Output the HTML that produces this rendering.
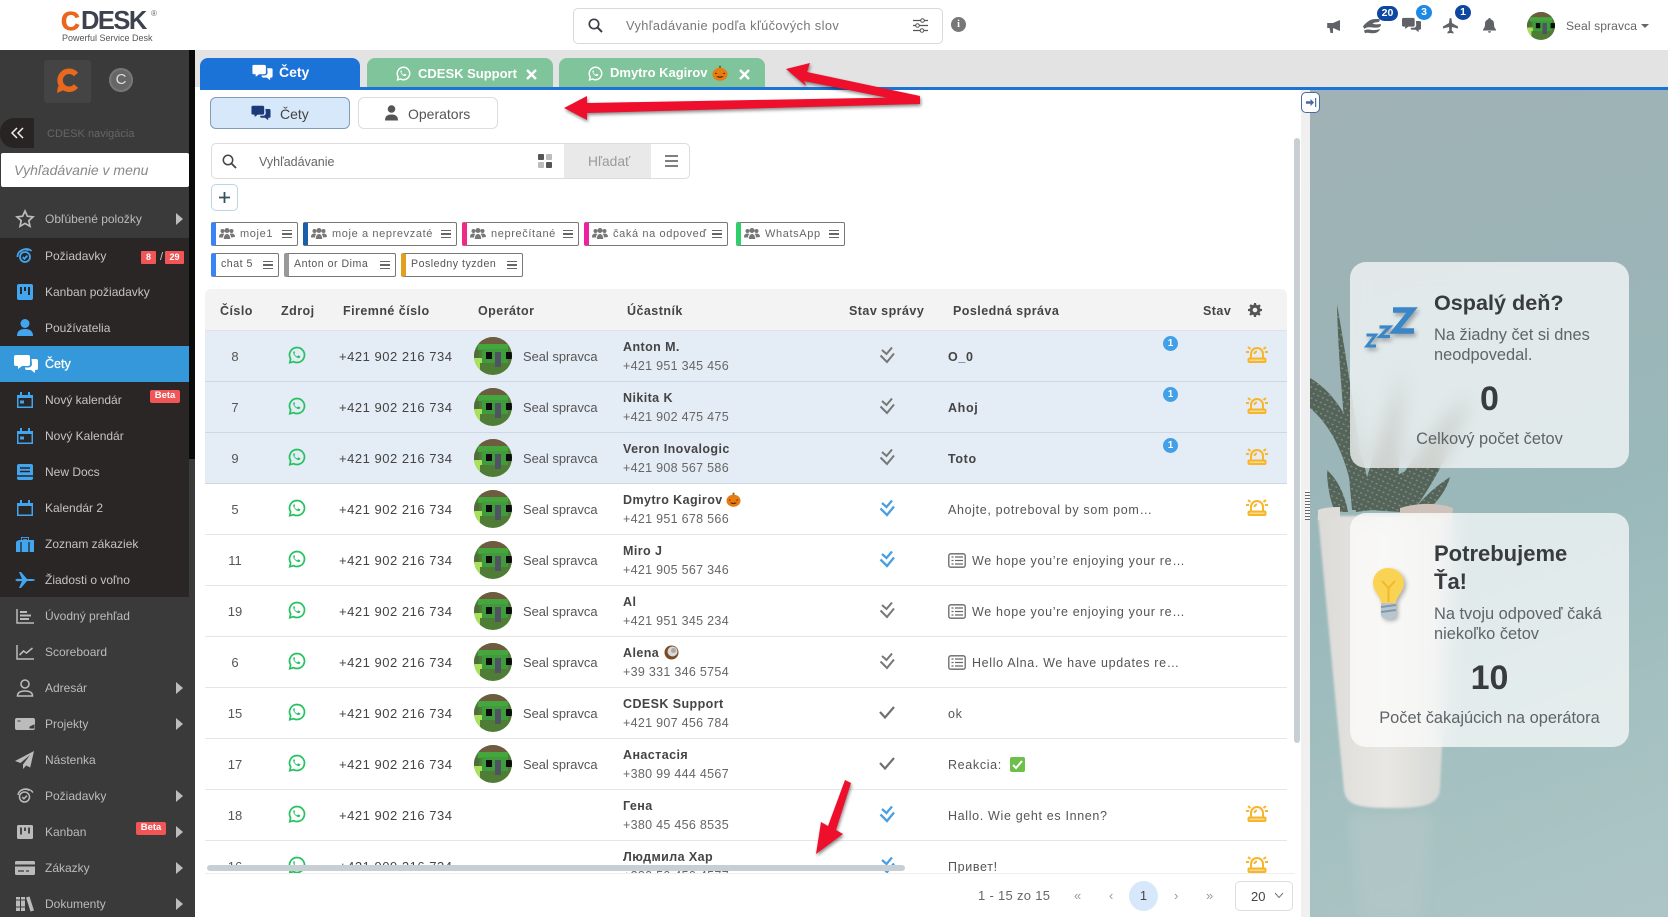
<!DOCTYPE html>
<html lang="sk"><head><meta charset="utf-8"><title>CDESK</title>
<style>
*{box-sizing:border-box}
html,body{margin:0;padding:0;width:1668px;height:917px;overflow:hidden;background:#fff;font-family:"Liberation Sans","Noto Sans CJK SC",sans-serif;color:#444}
.a,.a>*{position:absolute}
.a{inset:0;width:1668px;height:917px;overflow:hidden}
svg{display:block;overflow:visible}
.t{white-space:nowrap;line-height:20px;height:20px}
.s-i{position:absolute;left:0;width:189px;height:36px;font-size:12px;color:#c4c4c4;line-height:37px;padding-left:45px;white-space:nowrap}
.s-i.g{color:#bbb;width:195px}
.s-i svg{position:absolute;left:15px;top:8px;width:20px;height:20px}
.s-i i{position:absolute;left:176px;top:12px;width:0;height:0;border-left:7px solid #bdbdbd;border-top:6px solid transparent;border-bottom:6px solid transparent}
.beta{position:absolute;background:#f25555;color:#fff;font-weight:bold;font-size:9.5px;line-height:12px;height:13px;width:30px;text-align:center;border-radius:2px}
.chip{height:24px;border:1px solid #777;border-left-width:5px;border-radius:2px;font-size:11px;letter-spacing:.62px;color:#666;line-height:22px;white-space:nowrap;background:#fff}
.chip svg{position:absolute;left:3px;top:4px;width:16px;height:14px}
.chip span{position:absolute;left:24px}
.chip.n span{left:5px;font-size:10.6px;letter-spacing:.5px}
.chip b{position:absolute;right:5px;top:7px;width:10px;height:8px;border-top:1.5px solid #666;border-bottom:1.5px solid #666}
.chip b:after{content:"";position:absolute;left:0;right:0;top:2px;height:1.500px;background:#666}
.th{font-size:12.5px;font-weight:bold;letter-spacing:.46px;color:#444;top:301px;white-space:nowrap;line-height:20px}
.r{position:absolute;left:0;width:1082px;height:51px;border-bottom:1px solid #e6e6e6;background:#fff}
.r.h{background:#e4ecf5;border-bottom-color:#cdd8e6}
.r>*{position:absolute}
.n{left:0;width:60px;text-align:center;top:16px;font-size:13px;line-height:20px;color:#555}
.wa{left:83px;top:14px;width:18px;height:20px}
.ph{left:134px;top:16px;font-size:13px;letter-spacing:.52px;line-height:20px;color:#444;white-space:nowrap}
.av{left:269px;top:6px;width:38px;height:38px}
.op{left:318px;top:16px;font-size:12.9px;line-height:20px;color:#555;white-space:nowrap}
.nm{left:418px;top:6px;font-size:12.5px;font-weight:bold;letter-spacing:.42px;line-height:20px;color:#444;white-space:nowrap}
.p2{left:418px;top:25px;font-size:12.5px;letter-spacing:.3px;line-height:20px;color:#666;white-space:nowrap}
.ck{left:674px;top:14px;width:16px;height:20px}
.m{left:743px;top:16px;font-size:12.5px;letter-spacing:.66px;line-height:20px;color:#555;white-space:nowrap}
.m.b{font-weight:bold;color:#444}
.m.x{left:767px}
.nw{left:743px;top:18px;width:18px;height:15px}
.bd{left:958px;top:5px;width:15px;height:15px;border-radius:50%;background:#42a0e8;color:#fff;font-size:10px;font-weight:bold;text-align:center;line-height:15px}
.al{left:1040px;top:13px;width:24px;height:20px}
.emo{width:15px;height:15px}
.card{background:rgba(255,255,255,.7);backdrop-filter:blur(9px);-webkit-backdrop-filter:blur(9px);border-radius:16px}
.ct{font-weight:bold;font-size:22px;color:#383c3f;line-height:28px;white-space:nowrap}
.cs{font-size:16.4px;color:#5f6468;line-height:20px;white-space:nowrap}
.cn{font-weight:bold;font-size:34px;color:#383c3f;line-height:40px;text-align:center}
.hdi{fill:#5f6266}
</style></head><body>
<svg width="0" height="0" style="position:absolute"><defs>
<symbol id="wa" viewBox="0 0 24 26"><path d="M12 3a10 10 0 0 0-8.500 15.200L2.400 23.200l5-1.300A10 10 0 1 0 12 3z" fill="none" stroke="#26c262" stroke-width="2.300"/><path d="M8.600 7.700c-.6 0-1.200.5-1.500 1.400-.3 1.300.2 3 1.700 4.800 1.700 2 3.600 3.200 5.300 3.200 1.100 0 2-.6 2.300-1.600.1-.5 0-.7-.3-.9l-2.100-1c-.3-.2-.6-.1-.8.200l-.6.8c-.2.3-.4.300-.8.100-1.300-.5-2.400-1.600-3.200-2.900-.1-.3-.1-.5.100-.7l.5-.6c.2-.2.200-.4.100-.7l-.8-2c-.1-.3-.2-.4-.6-.4z" fill="#26c262"/></symbol>
<symbol id="av" viewBox="0 0 38 38"><defs><clipPath id="cc"><circle cx="19" cy="19" r="19"/></clipPath></defs><g clip-path="url(#cc)"><rect width="38" height="38" fill="#4f7d36"/><rect width="38" height="8" fill="#6d5c40"/><rect x="4" y="7" width="30" height="6" fill="#45a63e"/><rect x="8" y="12" width="26" height="14" fill="#3f9b3c"/><rect x="0" y="13" width="5" height="9" fill="#4d6d3a"/><rect x="0" y="21" width="8" height="17" fill="#a9e05c"/><rect x="6" y="26" width="10" height="12" fill="#4f7d36"/><rect x="12" y="15" width="6" height="7" fill="#0c0c0c"/><rect x="32" y="15" width="6" height="7" fill="#0c0c0c"/><rect x="21" y="15" width="6" height="15" fill="#4f5560"/></g></symbol>
<symbol id="ckg" viewBox="0 0 16 20"><path d="M3 5l4.500 4L13 2.500M1.500 10.500l6.500 6.500 7-8.500" fill="none" stroke="#777" stroke-width="2"/></symbol>
<symbol id="ckb" viewBox="0 0 16 20"><path d="M3 5l4.500 4L13 2.500M1.500 10.500l6.500 6.500 7-8.500" fill="none" stroke="#4a9fe2" stroke-width="2.300"/></symbol>
<symbol id="ck1" viewBox="0 0 16 20"><path d="M1 10l5 5.500L15 5" fill="none" stroke="#6f6f6f" stroke-width="2.200"/></symbol>
<symbol id="al" viewBox="0 0 24 20"><g fill="none" stroke="#f7b52b" stroke-width="2"><path d="M6 14V10a6 6 0 0 1 12 0v4M9.500 10a2.500 2.500 0 0 1 2.500-2.500"/><rect x="3.500" y="14.500" width="17" height="3.500" rx="1" fill="#fbd98a"/><path d="M1 8h3M20 8h3M3 3l2.500 2M21 3l-2.500 2"/></g></symbol>
<symbol id="nw" viewBox="0 0 18 15"><rect x=".8" y=".8" width="16.400" height="13.400" rx="2" fill="none" stroke="#666" stroke-width="1.300"/><path d="M3.500 4h2M3.500 7.500h2M3.500 11h2M7 4h8M7 7.500h8M7 11h8" stroke="#666" stroke-width="1.300"/></symbol>
<symbol id="pk" viewBox="0 0 16 16"><path d="M8 3V0.800" stroke="#5a6a2a" stroke-width="2"/><ellipse cx="8" cy="9.300" rx="7.500" ry="6.500" fill="#e77c12"/><path d="M3.500 7.500l2 1.500h-2.500zM12.500 7.500l-2 1.500h2.500zM4 11c2.500 2.500 5.500 2.500 8 0l-1.500.5-1-.5-1.500.8-1.500-.8-1 .5z" fill="#5a2a00"/></symbol>
<symbol id="ppl" viewBox="0 0 16 14"><g fill="#777"><circle cx="3.500" cy="4" r="2"/><circle cx="12.500" cy="4" r="2"/><circle cx="8" cy="3.500" r="2.500"/><path d="M0 10c0-2.500 1.500-3.500 3.500-3.500.7 0 1.300.2 1.800.5C4.500 8 4 9 4 10.500H0zM16 10c0-2.500-1.500-3.500-3.500-3.500-.7 0-1.300.2-1.800.5.800 1 1.300 2 1.300 3.500zM4.800 12c0-3 1.300-5 3.200-5s3.200 2 3.200 5z"/></g></symbol>
<symbol id="chat" viewBox="0 0 24 20"><path d="M2 1h12a2 2 0 0 1 2 2v7a2 2 0 0 1-2 2H8l-4 3v-3H2a2 2 0 0 1-2-2V3a2 2 0 0 1 2-2z"/><path d="M17.500 5H22a2 2 0 0 1 2 2v7a2 2 0 0 1-2 2h-1v3l-4-3h-4a2 2 0 0 1-2-2v-.500h3.500a3.500 3.500 0 0 0 3.500-3.500z"/></symbol>
<symbol id="tgl" viewBox="0 0 20 20"><path d="M3 8h7V4.500l5.500 5.500-5.500 5.500V12H3z"/><rect x="17" y="3" width="1.800" height="14"/></symbol>
</defs></svg>

<div class="a">
<!-- header -->
<div style="left:0;top:0;width:1668px;height:50px;background:#fff"></div>
<div style="left:61px;top:6px;font-size:26px;font-weight:bold;line-height:30px;letter-spacing:-1px;color:#e9661c;-webkit-text-stroke:.7px #e9661c">C</div>
<div style="left:81px;top:6px;font-size:25.5px;font-weight:bold;line-height:30px;letter-spacing:-1.500px;color:#3d424e">DESK</div>
<div style="left:151px;top:9px;font-size:8px;line-height:10px;color:#666">®</div>
<div class="t" style="left:62px;top:28px;font-size:9px;color:#555">Powerful Service Desk</div>

<div style="left:573px;top:8px;width:370px;height:36px;border:1px solid #d9d9d9;border-radius:5px;background:#fff"></div>
<svg style="left:588px;top:18px;width:15px;height:15px" viewBox="0 0 15 15"><circle cx="6" cy="6" r="4.700" fill="none" stroke="#3d3d45" stroke-width="1.700"/><path d="M9.500 9.500L14 14" stroke="#3d3d45" stroke-width="2"/></svg>
<div class="t" style="left:626px;top:16px;font-size:12.8px;letter-spacing:.4px;color:#777">Vyhľadávanie podľa kľúčových slov</div>
<svg style="left:913px;top:18px;width:15px;height:15px" viewBox="0 0 15 15"><path d="M0 2.500h15M0 7.500h15M0 12.500h15" stroke="#555" stroke-width="1.200"/><circle cx="9.500" cy="2.500" r="1.800" fill="#fff" stroke="#555"/><circle cx="4.500" cy="7.500" r="1.800" fill="#fff" stroke="#555"/><circle cx="9" cy="12.500" r="1.800" fill="#fff" stroke="#555"/></svg>
<div style="left:951px;top:17px;width:15px;height:15px;border-radius:50%;background:#777;color:#fff;font:bold 10px/15px 'Liberation Serif',serif;text-align:center">i</div>

<svg class="hdi" style="left:1326px;top:19px;width:15px;height:15px" viewBox="0 0 15 15"><path d="M14 1v11L7 9v5H4.500L3.500 9H1.200V4H7z"/></svg>
<svg class="hdi" style="left:1363px;top:18px;width:18px;height:16px" viewBox="0 0 18 16"><path d="M5 3.500C8 1 11 .8 16 1c1 0 1 2.500-.5 3-2.500.5-4.500.4-6 1.500C12 7 15 6 18 6.200c0 1.500-1 3-3 3.300-4 .5-7-.5-9.500-.2-2 .2-3 .7-4 1.700L0 8.500C1 6.500 3 5 5 3.500zM1 12.500c3-1.500 5-1 8-.5 2.500.3 5 0 8-1-1 3-4 4.500-8 4.200-3-.2-5-1-7 0z"/></svg>
<div style="left:1377px;top:6px;width:21px;height:15px;border-radius:8px;background:#0d47a1;color:#fff;font-size:10.5px;font-weight:bold;line-height:15px;text-align:center">20</div>
<svg class="hdi" style="left:1402px;top:17px;width:19px;height:16px" viewBox="0 0 24 20"><use href="#chat"/></svg>
<div style="left:1416px;top:5px;width:16px;height:15px;border-radius:50%;background:#1e88e5;color:#fff;font-size:10.500px;font-weight:bold;line-height:15px;text-align:center">3</div>
<svg class="hdi" style="left:1443px;top:18px;width:15px;height:16px" viewBox="0 0 15 16"><path d="M6.500 0.500C7 0 8 0 8.500 .5l.5 4.500 6 3.500v2L9 9l-.3 3.500L10.500 14v1.500L7.500 15l-3 .5V14l1.800-1.500L6 9l-6 1.500v-2L6 5z"/></svg>
<div style="left:1455px;top:5px;width:16px;height:15px;border-radius:50%;background:#0d47a1;color:#fff;font-size:10.500px;font-weight:bold;line-height:15px;text-align:center">1</div>
<svg class="hdi" style="left:1483px;top:18px;width:13px;height:15px" viewBox="0 0 13 15"><path d="M6.500 0a1.200 1.200 0 0 1 1.200 1.300C10 2 11 3.800 11 6c0 3 .7 4 2 5.500v1H0v-1C1.300 10 2 9 2 6c0-2.200 1-4 3.300-4.700A1.200 1.200 0 0 1 6.500 0zM5 13.300h3a1.500 1.500 0 0 1-3 0z"/></svg>
<svg style="left:1527px;top:12px;width:28px;height:28px" viewBox="0 0 38 38"><use href="#av"/></svg>
<div class="t" style="left:1566px;top:16px;font-size:12.1px;letter-spacing:.1px;color:#666">Seal spravca</div>
<div style="left:1641px;top:24px;width:0;height:0;border-top:4px solid #666;border-left:4px solid transparent;border-right:4px solid transparent"></div>

<!-- tab strip -->
<div style="left:195px;top:50px;width:1473px;height:37px;background:#e3e3e3"></div>
<div style="left:200px;top:58px;width:160px;height:32px;background:#1b73d8;border-radius:8px 8px 0 0"></div>
<svg style="left:252px;top:64px;width:21px;height:17px;fill:#fff" viewBox="0 0 24 20"><use href="#chat"/></svg>
<div class="t" style="left:279px;top:62px;font-size:14px;font-weight:bold;color:#fff">Čety</div>
<div style="left:367px;top:58px;width:186px;height:30px;background:#7fc49a;border-radius:8px 8px 0 0"></div>
<svg style="left:396px;top:65px;width:15px;height:17px" viewBox="0 0 24 26"><g style="filter:brightness(0) invert(1)"><use href="#wa"/></g></svg>
<div class="t" style="left:418px;top:64px;font-size:13px;font-weight:bold;color:#fff">CDESK Support</div>
<svg style="left:526px;top:69px;width:11px;height:11px" viewBox="0 0 11 11"><path d="M1 1l9 9M10 1l-9 9" stroke="#fff" stroke-width="2.400"/></svg>
<div style="left:559px;top:58px;width:206px;height:30px;background:#7fc49a;border-radius:8px 8px 0 0"></div>
<svg style="left:588px;top:65px;width:15px;height:17px" viewBox="0 0 24 26"><g style="filter:brightness(0) invert(1)"><use href="#wa"/></g></svg>
<div class="t" style="left:610px;top:63px;font-size:13px;font-weight:bold;color:#fff">Dmytro Kagirov</div>
<svg style="left:712px;top:65px;width:16px;height:16px" viewBox="0 0 16 16"><use href="#pk"/></svg>
<svg style="left:739px;top:69px;width:11px;height:11px" viewBox="0 0 11 11"><path d="M1 1l9 9M10 1l-9 9" stroke="#fff" stroke-width="2.400"/></svg>
<div style="left:200px;top:87px;width:1468px;height:3px;background:#1b73d8"></div>

<!-- sidebar -->
<div style="left:0;top:50px;width:195px;height:867px;background:#3a3a3a"></div>
<div style="left:189px;top:50px;width:6px;height:409px;background:#0a0a0a"></div>
<div style="left:44px;top:60px;width:47px;height:43px;background:#444;border-radius:3px"></div>
<svg style="left:55px;top:68px;width:25px;height:25px" viewBox="0 0 25 25"><path d="M21 6.500A9 9 0 1 0 21 18" fill="none" stroke="#e9681d" stroke-width="5.500"/><path d="M3 18l-1 7 7-3z" fill="#e9681d"/></svg>
<div style="left:109px;top:68px;width:24px;height:24px;border-radius:50%;background:#666;color:#ddd;font-size:15px;line-height:24px;text-align:center;box-shadow:inset 0 0 0 2px #777">C</div>
<div style="left:0;top:118px;width:34px;height:30px;background:#282423;border-radius:14px 0 0 14px"></div>
<svg style="left:11px;top:127px;width:13px;height:12px" viewBox="0 0 13 12"><path d="M6 1L1 6l5 5M12 1L7 6l5 5" fill="none" stroke="#eee" stroke-width="1.500"/></svg>
<div class="t" style="left:47px;top:124px;font-size:11px;color:#666">CDESK navigácia</div>
<div style="left:1px;top:153px;width:188px;height:34px;background:#fff;border-radius:2px;font-style:italic;font-size:14px;color:#888;line-height:35px;padding-left:13px">Vyhľadávanie v menu</div>
<div style="left:0;top:238px;width:189px;height:359px;background:#2a2625"></div>

<div class="s-i g" style="top:201px"><svg viewBox="0 0 20 20"><path d="M10 2l2.400 5.200 5.600.7-4.200 3.800 1.200 5.600-5-2.900-5 2.900 1.200-5.600L2 7.900l5.600-.7z" fill="none" stroke="#bbb" stroke-width="1.700"/></svg>Obľúbené položky<i></i></div>
<div class="s-i" style="top:238px"><svg viewBox="0 0 20 20"><g fill="none" stroke="#42a5f0" stroke-width="1.800"><circle cx="10" cy="11" r="5"/><path d="M2.500 11a7.500 7.500 0 0 1 11-6.700M5 6c3-3.500 8-4 11.500-1"/><path d="M7.700 11l1.700 1.800 3-3.200"/></g></svg>Požiadavky</div>
<div style="left:141px;top:251px;width:15px;height:13px;background:#f25555;color:#fff;font-size:9px;font-weight:bold;line-height:13px;text-align:center;border-radius:1px">8</div>
<div class="t" style="left:160px;top:247px;font-size:11px;color:#ccc">/</div>
<div style="left:165px;top:251px;width:19px;height:13px;background:#f25555;color:#fff;font-size:9px;font-weight:bold;line-height:13px;text-align:center;border-radius:1px">29</div>
<div class="s-i" style="top:274px"><svg viewBox="0 0 20 20"><rect x="2" y="2" width="16" height="16" rx="2" fill="#42a5f0"/><path d="M6 5v7M10 5v4M14 5v8" stroke="#2a2625" stroke-width="2"/></svg>Kanban požiadavky</div>
<div class="s-i" style="top:310px"><svg viewBox="0 0 20 20"><circle cx="10" cy="5.500" r="4.500" fill="#42a5f0"/><path d="M2 18c0-5 3-7 8-7s8 2 8 7z" fill="#42a5f0"/></svg>Používatelia</div>
<div style="left:0;top:346px;width:189px;height:36px;background:#3498db"></div>
<div class="s-i" style="top:346px;color:#fff;background:#3498db;font-size:12.500px;font-weight:normal;-webkit-text-stroke:.3px #fff"><svg viewBox="0 0 24 20" style="width:24px;left:14px;fill:#fff"><use href="#chat"/></svg>Čety</div>
<div class="s-i" style="top:382px"><svg viewBox="0 0 20 20"><path d="M2 5h16v13H2z" fill="#42a5f0"/><path d="M3.500 8h13v8.500h-13z" fill="#2a2625"/><path d="M5 2h2v4H5zM13 2h2v4h-2z" fill="#42a5f0"/><rect x="5" y="10.500" width="4" height="3" fill="#42a5f0"/></svg>Nový kalendár</div>
<div class="beta" style="left:150px;top:390px">Beta</div>
<div class="s-i" style="top:418px"><svg viewBox="0 0 20 20"><path d="M2 5h16v13H2z" fill="#42a5f0"/><path d="M3.500 8h13v8.500h-13z" fill="#2a2625"/><path d="M5 2h2v4H5zM13 2h2v4h-2z" fill="#42a5f0"/><rect x="5" y="10.500" width="4" height="3" fill="#42a5f0"/></svg>Nový Kalendár</div>
<div class="s-i" style="top:454px"><svg viewBox="0 0 20 20"><rect x="2" y="2" width="16" height="16" rx="2" fill="#42a5f0"/><path d="M5 6h10M5 9.500h10M2 14h16" stroke="#2a2625" stroke-width="1.500"/></svg>New Docs</div>
<div class="s-i" style="top:490px"><svg viewBox="0 0 20 20"><path d="M2 5h16v13H2z" fill="#42a5f0"/><path d="M3.500 8h13v8.500h-13z" fill="#2a2625"/><path d="M5 2h2v4H5zM13 2h2v4h-2z" fill="#42a5f0"/></svg>Kalendár 2</div>
<div class="s-i" style="top:526px"><svg viewBox="0 0 20 20"><path d="M6 6V3h8v3h5v12H1V9c0-2 2-3 5-3z" fill="#42a5f0"/><path d="M7.500 6V4.500h5V6M6 8v10M14 8v10" fill="none" stroke="#2a2625" stroke-width="1.300"/></svg>Zoznam zákaziek</div>
<div class="s-i" style="top:562px"><svg viewBox="0 0 20 20"><path d="M0 10l2-1.200L7 9 4 2h2l6 7h5c2 0 3 .6 3 1s-1 1-3 1h-5l-6 7H4l3-7-5 .2z" fill="#42a5f0"/></svg>Žiadosti o voľno</div>
<div class="s-i g" style="top:598px"><svg viewBox="0 0 20 20"><path d="M2 3v14h17" fill="none" stroke="#bbb" stroke-width="1.500"/><path d="M5 6h7M5 9.500h11M5 13h9" stroke="#bbb" stroke-width="2"/></svg>Úvodný prehľad</div>
<div class="s-i g" style="top:634px"><svg viewBox="0 0 20 20"><path d="M2 3v14h17" fill="none" stroke="#bbb" stroke-width="1.500"/><path d="M4.500 13l4-4 3 2 6-5" fill="none" stroke="#bbb" stroke-width="1.600"/></svg>Scoreboard</div>
<div class="s-i g" style="top:670px"><svg viewBox="0 0 20 20"><g fill="none" stroke="#bbb" stroke-width="1.600"><circle cx="10" cy="6" r="4"/><path d="M2.500 18c0-3.500 2.500-5 7.500-5s7.500 1.500 7.500 5z"/></g></svg>Adresár<i></i></div>
<div class="s-i g" style="top:706px"><svg viewBox="0 0 20 20"><rect x="0" y="4" width="20" height="12" rx="2" fill="#bbb"/><path d="M2.500 7h3M15 13l4-2v3h-4z" fill="#3a3a3a" stroke="#3a3a3a"/></svg>Projekty<i></i></div>
<div class="s-i g" style="top:742px"><svg viewBox="0 0 20 20"><path d="M19 1L0 11l5.500 2L15 5 8 14.500v4.500l3.200-3.500 4 2z" fill="#bbb"/></svg>Nástenka</div>
<div class="s-i g" style="top:778px"><svg viewBox="0 0 20 20"><g fill="none" stroke="#bbb" stroke-width="1.500"><circle cx="9.500" cy="11" r="5"/><path d="M3 9a7 7 0 0 1 11-4.500M6 4.500c3.500-2.500 9-2 12 2"/><path d="M7.200 11l1.700 1.800 3-3.200"/></g></svg>Požiadavky<i></i></div>
<div class="s-i g" style="top:814px"><svg viewBox="0 0 20 20"><rect x="2" y="3" width="16" height="14" rx="1.500" fill="#bbb"/><path d="M6 5.500v7M10 5.500v3.500M14 5.500v6" stroke="#3a3a3a" stroke-width="1.800"/></svg>Kanban<i></i></div>
<div class="beta" style="left:136px;top:822px">Beta</div>
<div class="s-i g" style="top:850px"><svg viewBox="0 0 20 20"><rect x="0" y="3" width="20" height="14" rx="1.500" fill="#bbb"/><path d="M0 7.500h20" stroke="#3a3a3a" stroke-width="2"/><path d="M3 13h6M11 13h3" stroke="#3a3a3a" stroke-width="1.300"/></svg>Zákazky<i></i></div>
<div class="s-i g" style="top:886px"><svg viewBox="0 0 20 20"><path d="M1 3h4v14H1zM6 3h4v14H6zM11 3.500l3.500-1 4.500 14-3.500 1z" fill="#bbb"/><path d="M1 6h9M1 13h9" stroke="#3a3a3a"/></svg>Dokumenty<i></i></div>

<!-- toolbar -->
<div style="left:210px;top:97px;width:140px;height:32px;background:#d6e8f9;border:1px solid #7f9cb9;border-radius:6px"></div>
<svg style="left:251px;top:105px;width:20px;height:16px;fill:#1c3a78" viewBox="0 0 24 20"><use href="#chat"/></svg>
<div class="t" style="left:280px;top:104px;font-size:14px;color:#444">Čety</div>
<div style="left:358px;top:97px;width:140px;height:32px;background:#fff;border:1px solid #ddd;border-radius:6px"></div>
<svg style="left:384px;top:105px;width:15px;height:16px;fill:#555" viewBox="0 0 15 16"><circle cx="7.500" cy="4" r="3.800"/><path d="M1 15.500c0-4.500 2.500-6 6.500-6s6.500 1.500 6.500 6z"/></svg>
<div class="t" style="left:408px;top:104px;font-size:14px;color:#555">Operators</div>

<div style="left:211px;top:143px;width:479px;height:36px;background:#fff;border:1px solid #dcdcdc;border-radius:5px"></div>
<div style="left:564px;top:144px;width:87px;height:34px;background:#e9e9e9"></div>
<svg style="left:222px;top:154px;width:15px;height:15px" viewBox="0 0 15 15"><circle cx="6" cy="6" r="4.700" fill="none" stroke="#444" stroke-width="1.500"/><path d="M9.500 9.500L14 14" stroke="#444" stroke-width="1.800"/></svg>
<div class="t" style="left:259px;top:152px;font-size:12.500px;color:#666">Vyhľadávanie</div>
<svg style="left:538px;top:154px;width:14px;height:14px" viewBox="0 0 14 14"><rect width="6" height="6" rx="1" fill="#555"/><rect x="8" width="6" height="6" rx="1" fill="#bbb"/><rect y="8" width="6" height="6" rx="1" fill="#bbb"/><rect x="8" y="8" width="6" height="6" rx="1" fill="#555"/></svg>
<div class="t" style="left:588px;top:152px;font-size:13.800px;color:#9a9a9a">Hľadať</div>
<svg style="left:665px;top:155px;width:13px;height:12px" viewBox="0 0 13 12"><path d="M0 1h13M0 6h13M0 11h13" stroke="#555" stroke-width="1.600"/></svg>
<div style="left:211px;top:184px;width:27px;height:27px;background:#fff;border:1px solid #b9d6e6;border-radius:5px"></div>
<svg style="left:219px;top:192px;width:11px;height:11px" viewBox="0 0 11 11"><path d="M5.500 0v11M0 5.500h11" stroke="#35505e" stroke-width="1.800"/></svg>

<div class="chip" style="left:211px;top:222px;width:87px;border-left-color:#3b82f6"><svg viewBox="0 0 16 14"><use href="#ppl"/></svg><span>moje1</span><b></b></div>
<div class="chip" style="left:303px;top:222px;width:154px;border-left-color:#1a5fa8"><svg viewBox="0 0 16 14"><use href="#ppl"/></svg><span>moje a neprevzaté</span><b></b></div>
<div class="chip" style="left:462px;top:222px;width:117px;border-left-color:#ee2a86"><svg viewBox="0 0 16 14"><use href="#ppl"/></svg><span>neprečítané</span><b></b></div>
<div class="chip" style="left:584px;top:222px;width:144px;border-left-color:#ee1fa0"><svg viewBox="0 0 16 14"><use href="#ppl"/></svg><span>čaká na odpoveď</span><b></b></div>
<div class="chip" style="left:736px;top:222px;width:109px;border-left-color:#2fcf6a"><svg viewBox="0 0 16 14"><use href="#ppl"/></svg><span>WhatsApp</span><b></b></div>
<div class="chip n" style="left:211px;top:253px;width:68px;border-left-color:#3b82f6"><span>chat 5</span><b></b></div>
<div class="chip n" style="left:284px;top:253px;width:112px;border-left-color:#999"><span>Anton or Dima</span><b></b></div>
<div class="chip n" style="left:401px;top:253px;width:122px;border-left-color:#e0a020"><span>Posledny tyzden</span><b></b></div>

<!-- table -->
<div style="left:205px;top:289px;width:1082px;height:42px;background:#f3f3f3;border-bottom:1px solid #e2e2e2;border-radius:6px 6px 0 0"></div>
<div class="th" style="left:220px">Číslo</div>
<div class="th" style="left:281px">Zdroj</div>
<div class="th" style="left:343px">Firemné číslo</div>
<div class="th" style="left:478px">Operátor</div>
<div class="th" style="left:627px">Účastník</div>
<div class="th" style="left:849px">Stav správy</div>
<div class="th" style="left:953px">Posledná správa</div>
<div class="th" style="left:1203px">Stav</div>
<svg style="left:1248px;top:303px;width:14px;height:14px" viewBox="0 0 14 14"><path d="M6 0h2l.4 1.900 1.300.5 1.600-1 1.400 1.400-1 1.600.5 1.300L14 6v2l-1.900.4-.5 1.300 1 1.600-1.400 1.400-1.600-1-1.300.5L8 14H6l-.4-1.900-1.300-.5-1.600 1-1.400-1.400 1-1.600-.5-1.300L0 8V6l1.900-.4.500-1.300-1-1.600L2.800 1.300l1.600 1 1.300-.5zM7 4.700a2.300 2.300 0 1 0 0 4.600 2.300 2.300 0 0 0 0-4.600z" fill="#555" fill-rule="evenodd"/></svg>

<div style="left:205px;top:331px;width:1082px;height:542px;overflow:hidden">
<div class="r h" style="top:0"><span class="n">8</span><svg class="wa"><use href="#wa"/></svg><span class="ph">+421 902 216 734</span><svg class="av"><use href="#av"/></svg><span class="op">Seal spravca</span><span class="nm">Anton M.</span><span class="p2">+421 951 345 456</span><svg class="ck"><use href="#ckg"/></svg><span class="m b">O_0</span><span class="bd">1</span><svg class="al"><use href="#al"/></svg></div>
<div class="r h" style="top:51px"><span class="n">7</span><svg class="wa"><use href="#wa"/></svg><span class="ph">+421 902 216 734</span><svg class="av"><use href="#av"/></svg><span class="op">Seal spravca</span><span class="nm">Nikita K</span><span class="p2">+421 902 475 475</span><svg class="ck"><use href="#ckg"/></svg><span class="m b">Ahoj</span><span class="bd">1</span><svg class="al"><use href="#al"/></svg></div>
<div class="r h" style="top:102px"><span class="n">9</span><svg class="wa"><use href="#wa"/></svg><span class="ph">+421 902 216 734</span><svg class="av"><use href="#av"/></svg><span class="op">Seal spravca</span><span class="nm">Veron Inovalogic</span><span class="p2">+421 908 567 586</span><svg class="ck"><use href="#ckg"/></svg><span class="m b">Toto</span><span class="bd">1</span><svg class="al"><use href="#al"/></svg></div>
<div class="r" style="top:153px"><span class="n">5</span><svg class="wa"><use href="#wa"/></svg><span class="ph">+421 902 216 734</span><svg class="av"><use href="#av"/></svg><span class="op">Seal spravca</span><span class="nm">Dmytro Kagirov</span><svg class="emo" style="left:521px;top:8px"><use href="#pk"/></svg><span class="p2">+421 951 678 566</span><svg class="ck"><use href="#ckb"/></svg><span class="m">Ahojte, potreboval by som pom…</span><svg class="al"><use href="#al"/></svg></div>
<div class="r" style="top:204px"><span class="n">11</span><svg class="wa"><use href="#wa"/></svg><span class="ph">+421 902 216 734</span><svg class="av"><use href="#av"/></svg><span class="op">Seal spravca</span><span class="nm">Miro J</span><span class="p2">+421 905 567 346</span><svg class="ck"><use href="#ckb"/></svg><svg class="nw"><use href="#nw"/></svg><span class="m x">We hope you’re enjoying your re…</span></div>
<div class="r" style="top:255px"><span class="n">19</span><svg class="wa"><use href="#wa"/></svg><span class="ph">+421 902 216 734</span><svg class="av"><use href="#av"/></svg><span class="op">Seal spravca</span><span class="nm">Al</span><span class="p2">+421 951 345 234</span><svg class="ck"><use href="#ckg"/></svg><svg class="nw"><use href="#nw"/></svg><span class="m x">We hope you’re enjoying your re…</span></div>
<div class="r" style="top:306px"><span class="n">6</span><svg class="wa"><use href="#wa"/></svg><span class="ph">+421 902 216 734</span><svg class="av"><use href="#av"/></svg><span class="op">Seal spravca</span><span class="nm">Alena</span><svg class="emo" style="left:459px;top:8px" viewBox="0 0 15 15"><circle cx="7.500" cy="7.500" r="7" fill="#7a4a22"/><circle cx="8.500" cy="6.500" r="5" fill="#d9d9d9"/><circle cx="9.500" cy="5.500" r="2.500" fill="#a8a8a8"/></svg><span class="p2">+39 331 346 5754</span><svg class="ck"><use href="#ckg"/></svg><svg class="nw"><use href="#nw"/></svg><span class="m x">Hello Alna. We have updates re…</span></div>
<div class="r" style="top:357px"><span class="n">15</span><svg class="wa"><use href="#wa"/></svg><span class="ph">+421 902 216 734</span><svg class="av"><use href="#av"/></svg><span class="op">Seal spravca</span><span class="nm">CDESK Support</span><span class="p2">+421 907 456 784</span><svg class="ck"><use href="#ck1"/></svg><span class="m">ok</span></div>
<div class="r" style="top:408px"><span class="n">17</span><svg class="wa"><use href="#wa"/></svg><span class="ph">+421 902 216 734</span><svg class="av"><use href="#av"/></svg><span class="op">Seal spravca</span><span class="nm">Анастасія</span><span class="p2">+380 99 444 4567</span><svg class="ck"><use href="#ck1"/></svg><span class="m">Reakcia:</span><svg style="left:805px;top:18px;width:15px;height:15px" viewBox="0 0 15 15"><rect width="15" height="15" rx="2" fill="#6cc04a"/><path d="M3 8l3 3 6-7" fill="none" stroke="#fff" stroke-width="2"/></svg></div>
<div class="r" style="top:459px"><span class="n">18</span><svg class="wa"><use href="#wa"/></svg><span class="ph">+421 902 216 734</span><span class="nm">Гена</span><span class="p2">+380 45 456 8535</span><svg class="ck"><use href="#ckb"/></svg><span class="m">Hallo. Wie geht es Innen?</span><svg class="al"><use href="#al"/></svg></div>
<div class="r" style="top:510px"><span class="n">16</span><svg class="wa"><use href="#wa"/></svg><span class="ph">+421 909 216 734</span><span class="nm">Людмила Хар</span><span class="p2">+380 50 450 4577</span><svg class="ck"><use href="#ckb"/></svg><span class="m">Привет!</span><svg class="al"><use href="#al"/></svg></div>
</div>
<div style="left:207px;top:865px;width:698px;height:6px;background:#c8cfd4;border-radius:3px"></div>
<div style="left:205px;top:873px;width:1090px;height:44px;background:#fff;border-top:1px solid #eee"></div>
<div style="left:1294px;top:138px;width:6px;height:605px;background:#c8cfd4;border-radius:3px"></div>

<!-- pagination -->
<div class="t" style="left:978px;top:886px;font-size:13px;letter-spacing:.3px;color:#666">1 - 15 zo 15</div>
<div class="t" style="left:1074px;top:886px;font-size:13px;color:#999">«</div>
<div class="t" style="left:1109px;top:886px;font-size:13px;color:#999">‹</div>
<div style="left:1129px;top:881px;width:29px;height:30px;border-radius:50%;background:#d6e8f9;color:#444;font-size:13px;line-height:30px;text-align:center">1</div>
<div class="t" style="left:1174px;top:886px;font-size:13px;color:#999">›</div>
<div class="t" style="left:1206px;top:886px;font-size:13px;color:#999">»</div>
<div style="left:1235px;top:881px;width:58px;height:30px;background:#fff;border:1px solid #ddd;border-radius:5px;font-size:13px;line-height:30px;padding-left:15px;color:#444">20</div>
<svg style="left:1274px;top:892px;width:10px;height:7px" viewBox="0 0 10 7"><path d="M1 1l4 4.500L9 1" fill="none" stroke="#777"/></svg>

<!-- right panel -->
<div style="left:1301px;top:90px;width:9px;height:827px;background:#f0f0f0"></div>
<div style="left:1305px;top:490px;width:6px;height:30px;background:repeating-linear-gradient(0deg,#666 0 1px,transparent 1px 3px),repeating-linear-gradient(90deg,transparent 0 1px,#fff 1px 3px)"></div>
<div style="left:1310px;top:90px;width:358px;height:827px;background:linear-gradient(160deg,#a0b2b5 0%,#9cb4b7 30%,#9ab9bb 55%,#a6c1c1 80%,#aec5c7 100%);overflow:hidden"></div>
<svg style="left:1310px;top:90px;width:358px;height:827px" viewBox="1310 90 358 827">
<defs><pattern id="lp" width="5" height="5" patternUnits="userSpaceOnUse" patternTransform="rotate(25)"><rect width="5" height="5" fill="#55645b"/><rect x="1" y="1" width="2" height="1.200" fill="#87917c"/></pattern>
<linearGradient id="vs" x1="0" x2="1" y1="0" y2="0"><stop offset="0" stop-color="#dcdbd7"/><stop offset=".5" stop-color="#e9e7e3"/><stop offset="1" stop-color="#d3d6d3"/></linearGradient>
<filter id="sf"><feGaussianBlur stdDeviation="1"/></filter><filter id="sf2"><feGaussianBlur stdDeviation="6"/></filter></defs>
<path d="M1337 304C1345 350 1358 430 1368 510L1352 510C1345 430 1338 360 1337 304z" fill="url(#lp)"/>
<path d="M1310 378C1340 395 1365 440 1372 510L1356 512C1348 455 1330 425 1310 408z" fill="url(#lp)"/>
<path d="M1358 510C1368 470 1385 420 1403 370 1402 420 1400 470 1395 510z" fill="url(#lp)"/>
<path d="M1385 510C1400 470 1440 420 1470 395 1458 440 1430 490 1412 512z" fill="url(#lp)"/>
<path d="M1370 510C1380 480 1400 470 1430 465 1415 490 1410 500 1400 512z" fill="url(#lp)"/>
<path d="M1327 470C1338 480 1345 495 1348 512L1335 512C1330 500 1327 485 1327 470z" fill="url(#lp)"/>
<path d="M1450 477C1447 490 1435 505 1425 512L1414 510C1425 495 1438 485 1450 477z" fill="url(#lp)"/>
<path d="M1400 508C1420 502 1440 503 1453 508L1452 520H1400z" fill="#cfc2ba"/>
<path d="M1318 510C1322 508 1330 507 1340 507V520H1318z" fill="#dedcd8"/>
<path d="M1318 516H1453L1440 790C1438 806 1420 808 1392 808 1360 808 1346 806 1344 790z" fill="url(#vs)" filter="url(#sf)"/>
<path d="M1350 815H1432L1420 917H1362z" fill="#b9cbca" opacity=".5" filter="url(#sf2)"/>
</svg>
<div style="left:1301px;top:92px;width:19px;height:21px;background:#fff;border:1px solid #4a6aa0;border-radius:5px"></div>
<svg style="left:1304px;top:96px;width:13px;height:13px;fill:#4a6aa0" viewBox="0 0 20 20"><use href="#tgl"/></svg>

<div class="card" style="left:1350px;top:262px;width:279px;height:206px"></div>
<div class="ct" style="left:1434px;top:289px;font-size:21.6px">Ospalý deň?</div>
<div class="cs" style="left:1434px;top:325px">Na žiadny čet si dnes</div>
<div class="cs" style="left:1434px;top:345px">neodpovedal.</div>
<div class="cn" style="left:1350px;top:379px;width:279px">0</div>
<div class="cs" style="left:1350px;top:429px;width:279px;text-align:center">Celkový počet četov</div>
<svg style="left:1364px;top:305px;width:52px;height:48px" viewBox="0 0 52 48"><g style="filter:drop-shadow(2px 3px 2px rgba(0,0,0,.3))" fill="none" stroke="#3a86c6"><path d="M29 5h19L31 26h19" stroke-width="5.500"/><path d="M15.500 22h10L16 31.500h10" stroke-width="3.200"/><path d="M2.500 30h9L3 41h9" stroke-width="3"/></g></svg>

<div class="card" style="left:1350px;top:513px;width:279px;height:234px"></div>
<div class="ct" style="left:1434px;top:540px">Potrebujeme</div>
<div class="ct" style="left:1434px;top:568px">Ťa!</div>
<div class="cs" style="left:1434px;top:604px">Na tvoju odpoveď čaká</div>
<div class="cs" style="left:1434px;top:624px">niekoľko četov</div>
<div class="cn" style="left:1350px;top:658px;width:279px">10</div>
<div class="cs" style="left:1350px;top:708px;width:279px;text-align:center">Počet čakajúcich na operátora</div>
<svg style="left:1372px;top:567px;width:35px;height:54px" viewBox="0 0 35 54"><g style="filter:drop-shadow(2px 2px 2px rgba(0,0,0,.3))"><path d="M16 1C7 1 1 8 1 16c0 7 5 11 7 16 1 2 1 3 1 4h15c0-1 0-2 1-4 2-5 7-9 7-16C32 8 25 1 16 1z" fill="#fbd354"/><path d="M10 14l6.500 7 6.500-7M16.500 21v14" fill="none" stroke="#efb92e" stroke-width="2"/><path d="M9 36h15v12c0 2-3 4-7.500 4S9 50 9 48z" fill="#b9c6cf"/><path d="M9 40l15-2M9 45l15-2" stroke="#8298ac" stroke-width="2"/></g></svg>

<!-- red arrows -->
<svg style="left:0;top:0;width:1668px;height:917px;pointer-events:none" viewBox="0 0 1668 917"><g fill="#ee0f2c" style="filter:drop-shadow(1px 2px 1.500px rgba(0,0,0,.45))">
<path d="M786 69L810 63 807 72 920 96 918 104 804 81 806 86z"/>
<path d="M564 108L587 96 587 103 920 97 920 104 587 113 587 120z"/>
<path d="M816 854L821 822 828 826 845 780 851 783 836 830 843 834z"/>
</g></svg>
</div>
</body></html>
